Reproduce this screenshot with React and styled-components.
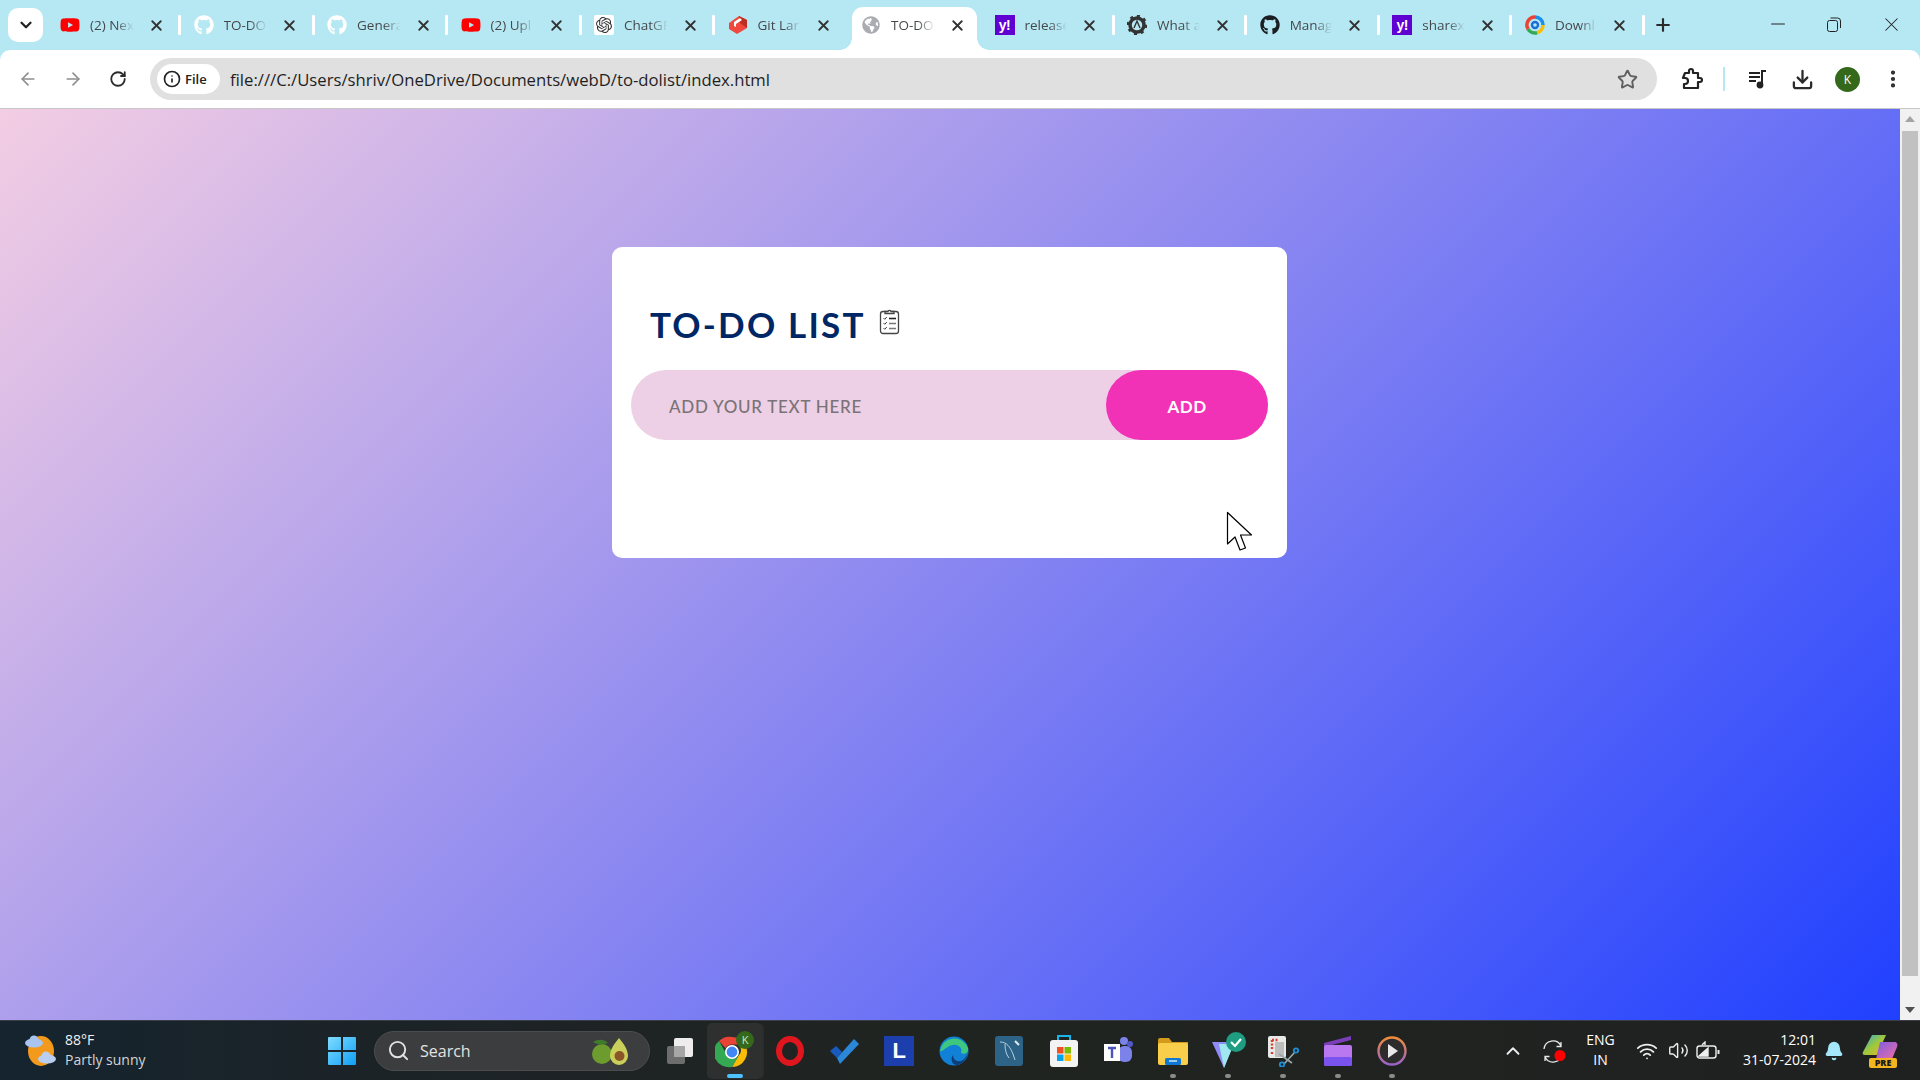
import styled, { createGlobalStyle } from 'styled-components';
import {
  ArrowLeft, ArrowRight, RotateCw, Info, Star, Download, X, Plus, Minus,
  Search, ChevronUp, ChevronDown, Wifi, Volume2, Bell, MoreVertical,
} from 'lucide-react';
import { FaGithub, FaYoutube, FaGlobeAmericas } from 'react-icons/fa';
import { SiOpenai } from 'react-icons/si';

const GlobalStyle = createGlobalStyle`
  html, body { margin: 0; padding: 0; height: 100%; overflow: hidden; }
  #root { height: 100%; }
  * { box-sizing: border-box; }
  body { font-family: "Open Sans", "Noto Sans", sans-serif; }
`;

const Screen = styled.div`
  display: flex;
  flex-direction: column;
  width: 1920px;
  height: 1080px;
  position: relative;
  background: #b6e8f4;
`;

/* tab strip */
const TabStrip = styled.div`
  display: flex;
  align-items: flex-end;
  height: 50px;
  flex: none;
  padding-left: 8px;
`;

const TabSearch = styled.div`
  width: 35px;
  height: 34px;
  margin: 0 3px 8px 0;
  background: #fff;
  border-radius: 10px;
  display: flex;
  align-items: center;
  justify-content: center;
  color: #222;
`;

const Tab = styled.div`
  position: relative;
  width: ${(p) => p.$w}px;
  height: 43px;
  flex: none;
  display: flex;
  align-items: center;
  padding: 0 15px 7px 14px;
  color: #45484b;
  ${(p) => p.$active && `
    &::before {
      content: '';
      position: absolute;
      left: 5px;
      right: 4px;
      top: 0;
      bottom: 0;
      background: #fff;
      border-radius: 11px 11px 0 0;
    }
    & > * { position: relative; }
  `}
  ${(p) => p.$sep && `
    &::after {
      content: '';
      position: absolute;
      right: -1.5px;
      top: 8px;
      width: 3px;
      height: 20px;
      background: #fff;
      border-radius: 1px;
    }
  `}
`;

const Flare = styled.span`
  position: absolute !important;
  bottom: 0;
  width: 12px;
  height: 12px;
  ${(p) => (p.$side === 'left' ? 'left: -7px;' : 'right: -8px;')}
  background: radial-gradient(
    circle at ${(p) => (p.$side === 'left' ? '0 0' : '100% 0')},
    transparent 11.5px,
    #fff 12px
  );
`;

const Favicon = styled.span`
  width: 20px;
  height: 20px;
  flex: none;
  display: flex;
  align-items: center;
  justify-content: center;
`;

const TabTitle = styled.span`
  flex: 1;
  min-width: 0;
  margin: 0 14px 0 10px;
  font-size: 13.5px;
  white-space: nowrap;
  -webkit-mask-image: linear-gradient(90deg, #000 60%, transparent 100%);
  mask-image: linear-gradient(90deg, #000 60%, transparent 100%);
`;

const YahooMark = styled.span`
  width: 20px;
  height: 20px;
  background: #5f01d1;
  color: #fff;
  font: 700 14px "Liberation Sans", sans-serif;
  display: flex;
  align-items: center;
  justify-content: center;
  letter-spacing: -0.5px;
`;

const OpenAiMark = styled.span`
  width: 20px;
  height: 20px;
  background: #fff;
  border-radius: 2px;
  display: flex;
  align-items: center;
  justify-content: center;
  color: #333;
`;

const NewTab = styled.div`
  width: 30px;
  height: 30px;
  margin: 0 0 10px 5px;
  display: flex;
  align-items: center;
  justify-content: center;
  color: #2b2b2b;
`;

const WindowControls = styled.div`
  margin-left: auto;
  display: flex;
  align-self: stretch;
  align-items: center;
  padding-bottom: 2px;
  color: #222;
`;

const WindowButton = styled.span`
  width: ${(p) => p.$w || 56}px;
  display: flex;
  align-items: center;
  justify-content: center;
`;

/* toolbar */
const Toolbar = styled.div`
  height: 59px;
  flex: none;
  background: #fff;
  border-radius: 10px 10px 0 0;
  border-bottom: 1px solid #c7c7c7;
  display: flex;
  align-items: center;
  padding: 0 0 0 5px;
`;

const ToolSlot = styled.span`
  width: 45px;
  height: 42px;
  flex: none;
  display: flex;
  align-items: center;
  justify-content: center;
  color: ${(p) => (p.$dim ? '#8f8f8f' : '#2b2b2b')};
`;

const Omnibox = styled.div`
  width: 1507px;
  height: 42px;
  margin: 0 12px 0 10px;
  background: #e0e0e0;
  border-radius: 21px;
  display: flex;
  align-items: center;
  padding: 0 19px 0 7px;
`;

const FileChip = styled.div`
  width: 63px;
  height: 30px;
  background: #fff;
  border-radius: 15px;
  display: flex;
  align-items: center;
  gap: 4px;
  padding-left: 6px;
  font-size: 13px;
  font-weight: 600;
  color: #222;
`;

const Url = styled.span`
  margin-left: 10px;
  font-size: 16.7px;
  color: #1f1f1f;
  white-space: nowrap;
  flex: 1;
`;

const ToolDivider = styled.span`
  width: 2px;
  height: 24px;
  margin: 0 10px 0 9px;
  background: #b6e8f4;
  flex: none;
`;

const Avatar = styled.span`
  width: 25px;
  height: 25px;
  border-radius: 50%;
  background: #34691c;
  color: #fff;
  font-size: 12px;
  display: flex;
  align-items: center;
  justify-content: center;
`;

/* page */
const PageRow = styled.div`
  flex: 1;
  display: flex;
  min-height: 0;
`;

const Viewport = styled.main`
  flex: 1;
  background: linear-gradient(135deg, #f3cde3 0%, #2040ff 100%);
  padding: 138px 1px 0 0;
`;

const Card = styled.section`
  width: 675px;
  height: 311px;
  margin: 0 auto;
  background: #fff;
  border-radius: 10px;
  padding: 46px 19px 0;
`;

const Heading = styled.h2`
  margin: 0 0 15px 19px;
  display: flex;
  align-items: center;
  gap: 13px;
  height: 62px;
  color: #002765;
  font: 700 35px "Comic Sans MS", Lato, sans-serif;
  letter-spacing: 2.2px;
  white-space: nowrap;
`;

const ClipIcon = styled.svg`
  width: 21px;
  height: 27px;
  margin-top: -5px;
`;

const InputRow = styled.div`
  height: 70px;
  background: #edd0e5;
  border-radius: 35px;
  display: flex;
  align-items: center;
  justify-content: space-between;
`;

const TodoInput = styled.input`
  flex: 1;
  min-width: 0;
  height: 100%;
  border: none;
  outline: none;
  background: transparent;
  padding: 2px 0 0 38px;
  font: 500 17px "Comic Sans MS", Lato, sans-serif;
  letter-spacing: 0.72px;
  &::placeholder { color: #7a7378; opacity: 1; }
`;

const AddButton = styled.button`
  width: 162px;
  height: 70px;
  border: none;
  border-radius: 35px;
  background: #f232b6;
  color: #fff;
  padding-top: 4px;
  font: 700 17px "Comic Sans MS", Lato, sans-serif;
  letter-spacing: 0.5px;
`;

const Cursor = styled.svg`
  position: absolute;
  left: 1226px;
  top: 511px;
  width: 28px;
  height: 41px;
`;

/* scrollbar */
const Scrollbar = styled.aside`
  width: 20px;
  flex: none;
  background: #f1f1f1;
  display: flex;
  flex-direction: column;
  align-items: center;
  padding-top: 22px;
  position: relative;
`;

const ScrollArrow = styled.span`
  position: absolute;
  left: 5px;
  ${(p) => (p.$down ? 'bottom: 7px; border-top: 6px solid #505050;' : 'top: 7px; border-bottom: 6px solid #a3a3a3;')}
  border-left: 5px solid transparent;
  border-right: 5px solid transparent;
`;

const ScrollThumb = styled.span`
  width: 16px;
  height: 845px;
  background: #c1c1c1;
`;

/* taskbar */
const Taskbar = styled.footer`
  height: 60px;
  flex: none;
  display: flex;
  align-items: center;
  background: linear-gradient(90deg, #15242f 0%, #1c2327 20%, #202420 50%, #1f2120 100%);
  border-top: 1px solid #3a3f47;
  color: #fff;
`;

const Weather = styled.div`
  width: 310px;
  flex: none;
  display: flex;
  align-items: center;
  gap: 8px;
  padding-left: 24px;
`;

const WeatherText = styled.div`
  font-size: 14px;
  line-height: 20px;
  color: #f2f2f2;
  margin-top: -1px;
  span { display: block; color: #d4d4d4; }
`;

const StartSlot = styled.span`
  width: 64px;
  flex: none;
  display: flex;
  justify-content: center;
`;

const SearchPill = styled.div`
  width: 276px;
  height: 40px;
  flex: none;
  background: #3c3d3e;
  border: 1px solid #4c4d4e;
  border-radius: 20px;
  display: flex;
  align-items: center;
  padding: 0 20px 0 12px;
  gap: 10px;
  color: #e2e2e2;
  font-size: 16px;
  svg:last-child { margin-left: auto; }
`;

const TaskIcons = styled.div`
  display: flex;
  margin-left: 2.6px;
  flex: none;
`;

const TaskSlot = styled.span`
  position: relative;
  width: 54.8px;
  height: 56px;
  display: flex;
  align-items: center;
  justify-content: center;
  ${(p) => p.$on && `
    background: #2d302f;
    border-radius: 5px;
    box-shadow: 3px 0 0 -1px #2a2d2c;
  `}
`;

const RunDot = styled.i`
  position: absolute;
  bottom: 1px;
  left: 50%;
  transform: translateX(-50%);
  width: ${(p) => (p.$on ? 16 : 6)}px;
  height: 4px;
  border-radius: 2px;
  background: ${(p) => (p.$on ? '#4cc2ff' : '#8a8a8a')};
`;

const Tray = styled.div`
  margin-left: auto;
  display: flex;
  align-items: center;
  padding-right: 12px;
  flex: none;
`;

const TraySlot = styled.span`
  width: ${(p) => p.$w}px;
  display: flex;
  align-items: center;
  justify-content: center;
  position: relative;
`;

const Lang = styled.div`
  width: 56px;
  text-align: center;
  font-size: 14px;
  line-height: 20px;
  margin-top: -1px;
`;

const Clock = styled.div`
  width: 92px;
  text-align: right;
  font-size: 14px;
  line-height: 20px;
  margin-top: -1px;
`;

const GitBox = () => (
  <svg width="20" height="20" viewBox="0 0 20 20">
    <polygon points="1,8 11,1 19,5 19,13 9,19 1,14" fill="#f0483e" />
    <polygon points="11,1 19,5 19,13 12,8" fill="#bc2d22" />
    <polygon points="6,7 12,3 14,5 8,9 8,12 6,11" fill="#fff" />
  </svg>
);

const GearMark = () => (
  <svg width="20" height="20" viewBox="0 0 20 20">
    <circle cx="10" cy="10" r="7" fill="none" stroke="#333" strokeWidth="3.5" />
    <circle cx="10" cy="10" r="9" fill="none" stroke="#333" strokeWidth="2.5" strokeDasharray="3 4" />
    <path d="M7 13l3-7 3 7" fill="none" stroke="#333" strokeWidth="1.4" />
  </svg>
);

const SwirlMark = () => (
  <svg width="20" height="20" viewBox="0 0 20 20" fill="none" strokeWidth="3.5">
    <path d="M10 2a8 8 0 0 1 8 8" stroke="#1a8fe8" />
    <path d="M18 10a8 8 0 0 1-6 7.7" stroke="#fbbc05" />
    <path d="M12 17.7A8 8 0 0 1 3 14" stroke="#34a853" />
    <path d="M3 14A8 8 0 0 1 10 2" stroke="#ea4335" />
    <circle cx="10" cy="10" r="3" stroke="#1a6fd8" strokeWidth="2.4" />
  </svg>
);

const TABS = [
  { title: '(2) Nex', icon: <FaYoutube size={22} color="#f00" /> },
  { title: 'TO-DO', icon: <FaGithub size={20} color="#fff" /> },
  { title: 'Genera', icon: <FaGithub size={20} color="#fff" /> },
  { title: '(2) Upl', icon: <FaYoutube size={22} color="#f00" /> },
  { title: 'ChatGP', icon: <OpenAiMark><SiOpenai size={16} /></OpenAiMark> },
  { title: 'Git Lar', icon: <GitBox /> },
  { title: 'TO-DO', icon: <FaGlobeAmericas size={18} color="#a9adb3" />, active: true },
  { title: 'release', icon: <YahooMark>y!</YahooMark> },
  { title: 'What a', icon: <GearMark /> },
  { title: 'Manag', icon: <FaGithub size={20} color="#1b1f23" /> },
  { title: 'sharex', icon: <YahooMark>y!</YahooMark> },
  { title: 'Downl', icon: <SwirlMark /> },
];

const RestoreIcon = () => (
  <svg width="14" height="15" viewBox="0 0 14 15" fill="none" stroke="#222" strokeWidth="1">
    <rect x="0.5" y="3.5" width="10" height="11" rx="2" />
    <path d="M3.5 1h7a3 3 0 0 1 3 3v7" />
  </svg>
);

const PuzzleIcon = () => (
  <svg width="22" height="24" viewBox="0 0 22 24" fill="none" stroke="#222" strokeWidth="2.2" strokeLinejoin="round">
    <path d="M4 6h4V4a2 2 0 0 1 4 0v2h5v5h2a2 2 0 0 1 0 4h-2v6H3v-4h1a3 3 0 0 0 0-6H2z" />
  </svg>
);

const MediaIcon = () => (
  <svg width="22" height="22" viewBox="0 0 22 22" fill="none" stroke="#222" strokeWidth="2">
    <path d="M2 5h11M2 9h11M2 13h7" />
    <path d="M15 17V3h4" />
    <circle cx="13" cy="17" r="2.4" fill="#222" />
  </svg>
);

const ClipboardIcon = () => (
  <ClipIcon viewBox="0 0 21 27" fill="none" stroke="#444" strokeWidth="1.3">
    <rect x="1.5" y="3.5" width="18" height="22" rx="2.5" />
    <path d="M6 5.5V3.5h3a1.6 1.6 0 0 1 3 0h3v2z" fill="#fff" />
    <path d="M4.5 10l1.3 1.3 2-2.3M4.5 15l1.3 1.3 2-2.3M4.5 20l1.3 1.3 2-2.3" strokeWidth="1" />
    <path d="M10 10.5h7" stroke="#222" strokeWidth="1.6" />
    <path d="M10 15.5h7M10 20.5h7" stroke="#777" strokeWidth="1.6" />
  </ClipIcon>
);

const WeatherIcon = () => (
  <svg width="33" height="36" viewBox="0 0 33 36">
    <ellipse cx="17" cy="18" rx="13" ry="15" fill="#f39a1d" />
    <ellipse cx="10" cy="10" rx="9" ry="4.5" fill="#a9c4ee" />
    <circle cx="10" cy="7" r="4.5" fill="#a9c4ee" />
    <ellipse cx="23" cy="26" rx="9" ry="4.5" fill="#b9cff2" />
    <circle cx="22" cy="23" r="4.5" fill="#b9cff2" />
  </svg>
);

const WinLogo = () => (
  <svg width="30" height="30" viewBox="0 0 30 30">
    <defs>
      <linearGradient id="win" x1="0" y1="0" x2="1" y2="1">
        <stop offset="0" stopColor="#7fdcff" />
        <stop offset="1" stopColor="#0f9ef5" />
      </linearGradient>
    </defs>
    <path d="M1 2a1 1 0 0 1 1-1h12v13H1zM16 1h12a1 1 0 0 1 1 1v12H16zM1 16h13v13H2a1 1 0 0 1-1-1zM16 16h13v12a1 1 0 0 1-1 1H16z" fill="url(#win)" />
  </svg>
);

const AvocadoIcon = () => (
  <svg width="37" height="28" viewBox="0 0 37 28">
    <circle cx="10" cy="17" r="10" fill="#6d9c2e" />
    <path d="M1 5c5-3 11-3 15 1-5 2-11 2-15-1z" fill="#3f7b2a" />
    <path d="M27 1c4 5 9 11 9 18a8.5 8.5 0 0 1-18 0c0-7 5-13 9-18z" fill="#c9cf5a" />
    <circle cx="27.5" cy="19" r="5" fill="#8a5527" />
  </svg>
);

const TaskView = () => (
  <svg width="28" height="28" viewBox="0 0 28 28">
    <rect x="1" y="9" width="18" height="18" rx="2" fill="#6d6d6d" />
    <rect x="8" y="1" width="19" height="19" rx="2" fill="#ededed" />
    <rect x="8" y="9" width="11" height="11" fill="#a6a6a6" />
  </svg>
);

const ChromeIcon = () => (
  <svg width="40" height="42" viewBox="0 0 40 42">
    <path d="M17 7a15 15 0 0 1 13 7.5H17a7.5 7.5 0 0 0-6.5 3.7L4 11A15 15 0 0 1 17 7z" fill="#ea4335" />
    <path d="M30 14.5A15 15 0 0 1 17 37l6.5-11.2a7.5 7.5 0 0 0 0-11.3z" fill="#fbbc05" />
    <path d="M4 11l6.5 11.2A7.5 7.5 0 0 0 23.5 26L17 37A15 15 0 0 1 4 11z" fill="#34a853" />
    <circle cx="17" cy="22" r="6.2" fill="#4285f4" stroke="#fff" strokeWidth="1.6" />
    <circle cx="30" cy="10" r="9" fill="#34691c" />
    <text x="30" y="14" textAnchor="middle" fontSize="11" fill="#cfe6c0" fontFamily="Open Sans">K</text>
  </svg>
);

const OperaIcon = () => (
  <svg width="30" height="32" viewBox="0 0 30 32">
    <ellipse cx="15" cy="16" rx="11" ry="12" fill="none" stroke="#e0161f" strokeWidth="6" />
  </svg>
);

const TodoIcon = () => (
  <svg width="30" height="26" viewBox="0 0 30 26">
    <path d="M1 13l6-5 6 6-5 6z" fill="#185abd" />
    <path d="M8 20L25 1l5 5-19 20z" fill="#2b88d8" />
  </svg>
);

const LetterL = styled.span`
  width: 30px;
  height: 30px;
  background: #1d3fae;
  color: #fff;
  font: 700 22px "Liberation Sans", sans-serif;
  display: flex;
  align-items: center;
  justify-content: center;
`;

const EdgeIcon = () => (
  <svg width="30" height="30" viewBox="0 0 30 30">
    <circle cx="15" cy="15" r="14.5" fill="#1081d6" />
    <path d="M1 15A14.5 14.5 0 0 1 29 12c1 5-4 7-7 5 2-5-3-9-8-8-7 1-11 8-13 6z" fill="#3ec77f" />
    <path d="M29 17c-1 7-7 12-11 12-5 0-7-6-4-10 0 4 3 7 8 6 3-1 5-4 7-8z" fill="#0c3e78" />
  </svg>
);

const MysqlIcon = () => (
  <svg width="28" height="30" viewBox="0 0 28 30">
    <rect width="28" height="30" rx="3" fill="#2d6386" />
    <path d="M5 6c7 0 10 5 13 12l2 6M10 8c0 6 1 10 4 14" stroke="#b7cfdc" strokeWidth="1" fill="none" />
    <path d="M20 5l4 4" stroke="#dfe9ee" strokeWidth="2" />
  </svg>
);

const StoreIcon = () => (
  <svg width="30" height="32" viewBox="0 0 30 32">
    <path d="M9 6V1h12v5" fill="none" stroke="#1ab5e8" strokeWidth="2" />
    <rect x="1" y="5" width="28" height="27" rx="3" fill="#f3f3f3" />
    <rect x="8" y="12" width="6.5" height="6.5" fill="#f25022" />
    <rect x="15.5" y="12" width="6.5" height="6.5" fill="#7fba00" />
    <rect x="8" y="19.5" width="6.5" height="6.5" fill="#00a4ef" />
    <rect x="15.5" y="19.5" width="6.5" height="6.5" fill="#ffb900" />
  </svg>
);

const TeamsIcon = () => (
  <svg width="32" height="30" viewBox="0 0 32 30">
    <circle cx="22" cy="5" r="4" fill="#7b83eb" />
    <circle cx="28" cy="8" r="3" fill="#5059c9" />
    <rect x="16" y="10" width="14" height="16" rx="6" fill="#7b83eb" />
    <rect x="2" y="8" width="16" height="17" fill="#fff" />
    <path d="M6 12h8M10 12v10" stroke="#4b53bc" strokeWidth="2.4" />
  </svg>
);

const FolderIcon = () => (
  <svg width="30" height="28" viewBox="0 0 30 28">
    <path d="M0 3a2 2 0 0 1 2-2h9l3 4h16v6H0z" fill="#d39a1c" />
    <rect y="6" width="30" height="22" rx="2" fill="#f9ce4b" />
    <rect x="7" y="21" width="16" height="7" rx="1.5" fill="#0f78d4" />
    <path d="M11 24h8" stroke="#cfe8fb" strokeWidth="1.5" />
  </svg>
);

const VectorIcon = () => (
  <svg width="36" height="38" viewBox="0 0 36 38">
    <path d="M2 10h22L14 36z" fill="#8f8cf6" />
    <path d="M9 12h15L14 36z" fill="#9fe8ef" />
    <circle cx="26" cy="10" r="10" fill="#1f9d82" />
    <path d="M21 10l4 4 6-7" fill="none" stroke="#fff" strokeWidth="2.2" />
  </svg>
);

const SnipIcon = () => (
  <svg width="32" height="32" viewBox="0 0 32 32">
    <rect x="1" y="1" width="18" height="22" rx="2" fill="#e8e8e8" />
    <path d="M5 5h6M5 5v9M5 17v2" stroke="#d8402f" strokeWidth="2.4" strokeDasharray="2 1.5" fill="none" />
    <rect x="8" y="7" width="9" height="15" fill="#bdbdbd" />
    <path d="M12 19l13 9M28 17L17 29" stroke="#9aa" strokeWidth="1.6" />
    <circle cx="15" cy="29.5" r="2.2" fill="none" stroke="#1a8fd8" strokeWidth="1.8" />
    <circle cx="29" cy="15.5" r="2.2" fill="none" stroke="#1a8fd8" strokeWidth="1.8" />
  </svg>
);

const ClipchampIcon = () => (
  <svg width="30" height="30" viewBox="0 0 30 30">
    <path d="M1 7L28 0v4L1 11z" fill="#7a3fb8" />
    <rect x="1" y="9" width="28" height="21" rx="2" fill="#b978f0" />
    <rect x="1" y="21" width="28" height="9" rx="2" fill="#7a52ee" />
  </svg>
);

const PlayerIcon = () => (
  <svg width="30" height="32" viewBox="0 0 30 32">
    <defs>
      <linearGradient id="ring" x1="0" y1="0" x2="0" y2="1">
        <stop offset="0" stopColor="#f08c3a" />
        <stop offset="1" stopColor="#9a63c9" />
      </linearGradient>
    </defs>
    <circle cx="15" cy="16" r="13.5" fill="#2c2c2c" stroke="url(#ring)" strokeWidth="2.4" />
    <path d="M11 9l10 7-10 7z" fill="#e8e8e8" />
  </svg>
);

const SyncIcon = () => (
  <svg width="26" height="26" viewBox="0 0 26 26" fill="none" stroke="#e8e8e8" strokeWidth="1.3">
    <path d="M3 11a9 9 0 0 1 17-3M20 4v4.5h-4.5" />
    <path d="M21 16a9 9 0 0 1-17 3M4 23v-4.5h4.5" />
    <circle cx="19" cy="17.5" r="5.5" fill="#f00" stroke="none" />
  </svg>
);

const BatteryIcon = () => (
  <svg width="24" height="20" viewBox="0 0 24 20" fill="none" stroke="#eee" strokeWidth="1.4">
    <rect x="1" y="5" width="19" height="12" rx="2.5" />
    <path d="M22.5 9v4" strokeWidth="2" />
    <path d="M3 15L12 7v8z" fill="#eee" />
    <path d="M6 4l3-3v3" />
  </svg>
);

const CopilotIcon = () => (
  <svg width="36" height="36" viewBox="0 0 36 36">
    <defs>
      <linearGradient id="cp" x1="0" y1="0" x2="1" y2="1">
        <stop offset="0" stopColor="#2aa6e6" />
        <stop offset="0.5" stopColor="#9ec93a" />
        <stop offset="1" stopColor="#f0b030" />
      </linearGradient>
      <linearGradient id="cp2" x1="0" y1="0" x2="1" y2="1">
        <stop offset="0" stopColor="#7c5be0" />
        <stop offset="1" stopColor="#ef6fa8" />
      </linearGradient>
    </defs>
    <path d="M10 2h14l-9 20H3c-2 0-3-1-2-3z" fill="url(#cp)" />
    <path d="M18 9h14c3 0 4 2 3 5l-5 12H14z" fill="url(#cp2)" />
    <rect x="7" y="25" width="28" height="10" rx="2" fill="#f3b61f" />
    <text x="21" y="33" textAnchor="middle" fontSize="9" fontWeight="800" fill="#1a1a1a" fontFamily="Open Sans">PRE</text>
  </svg>
);

const TASK_ITEMS = [
  { el: <TaskView /> },
  { el: <ChromeIcon />, on: true },
  { el: <OperaIcon /> },
  { el: <TodoIcon /> },
  { el: <LetterL>L</LetterL> },
  { el: <EdgeIcon /> },
  { el: <MysqlIcon /> },
  { el: <StoreIcon /> },
  { el: <TeamsIcon /> },
  { el: <FolderIcon />, dot: true },
  { el: <VectorIcon />, dot: true },
  { el: <SnipIcon />, dot: true },
  { el: <ClipchampIcon />, dot: true },
  { el: <PlayerIcon />, dot: true },
];

export default function App() {
  return (
    <Screen>
      <GlobalStyle />
      <TabStrip>
        <TabSearch><ChevronDown size={18} strokeWidth={3} /></TabSearch>
        {TABS.map((tab, i) => {
          const next = TABS[i + 1];
          return (
            <Tab
              key={i}
              $w={i < 7 ? 133.5 : 132.6}
              $active={tab.active}
              $sep={!tab.active && !(next && next.active)}
            >
              {tab.active && <Flare $side="left" />}
              <Favicon>{tab.icon}</Favicon>
              <TabTitle>{tab.title}</TabTitle>
              <X size={17} strokeWidth={2.6} color="#333" />
              {tab.active && <Flare $side="right" />}
            </Tab>
          );
        })}
        <NewTab><Plus size={20} strokeWidth={2.6} /></NewTab>
        <WindowControls>
          <WindowButton><Minus size={22} strokeWidth={1.1} /></WindowButton>
          <WindowButton><RestoreIcon /></WindowButton>
          <WindowButton $w={58}><X size={23} strokeWidth={1.1} /></WindowButton>
        </WindowControls>
      </TabStrip>

      <Toolbar>
        <ToolSlot $dim><ArrowLeft size={20} /></ToolSlot>
        <ToolSlot $dim><ArrowRight size={20} /></ToolSlot>
        <ToolSlot><RotateCw size={18} strokeWidth={2.4} /></ToolSlot>
        <Omnibox>
          <FileChip><Info size={18} strokeWidth={2.2} />File</FileChip>
          <Url>file:///C:/Users/shriv/OneDrive/Documents/webD/to-dolist/index.html</Url>
          <Star size={21} strokeWidth={2.2} color="#5f5f5f" />
        </Omnibox>
        <ToolSlot><PuzzleIcon /></ToolSlot>
        <ToolDivider />
        <ToolSlot><MediaIcon /></ToolSlot>
        <ToolSlot><Download size={23} strokeWidth={2.4} /></ToolSlot>
        <ToolSlot><Avatar>K</Avatar></ToolSlot>
        <ToolSlot><MoreVertical size={22} strokeWidth={2.6} /></ToolSlot>
      </Toolbar>

      <PageRow>
        <Viewport>
          <Card>
            <Heading>
              TO-DO LIST
              <ClipboardIcon />
            </Heading>
            <InputRow>
              <TodoInput placeholder="ADD YOUR TEXT HERE" />
              <AddButton>ADD</AddButton>
            </InputRow>
          </Card>
        </Viewport>
        <Scrollbar>
          <ScrollArrow />
          <ScrollThumb />
          <ScrollArrow $down />
        </Scrollbar>
      </PageRow>

      <Taskbar>
        <Weather>
          <WeatherIcon />
          <WeatherText>
            88°F
            <span>Partly sunny</span>
          </WeatherText>
        </Weather>
        <StartSlot><WinLogo /></StartSlot>
        <SearchPill>
          <Search size={23} strokeWidth={2} />
          Search
          <AvocadoIcon />
        </SearchPill>
        <TaskIcons>
          {TASK_ITEMS.map((item, i) => (
            <TaskSlot key={i} $on={item.on}>
              {item.el}
              {(item.on || item.dot) && <RunDot $on={item.on} />}
            </TaskSlot>
          ))}
        </TaskIcons>
        <Tray>
          <TraySlot $w={44}><ChevronUp size={22} strokeWidth={2} color="#eee" /></TraySlot>
          <TraySlot $w={38}><SyncIcon /></TraySlot>
          <Lang>ENG<br />IN</Lang>
          <TraySlot $w={36}><Wifi size={22} color="#eee" /></TraySlot>
          <TraySlot $w={27}><Volume2 size={21} strokeWidth={1.6} color="#eee" /></TraySlot>
          <TraySlot $w={32.5}><BatteryIcon /></TraySlot>
          <Clock>12:01<br />31-07-2024</Clock>
          <TraySlot $w={36}><Bell size={20} fill="#a5e6fb" color="#a5e6fb" /></TraySlot>
          <TraySlot $w={56}><CopilotIcon /></TraySlot>
        </Tray>
      </Taskbar>

      <Cursor viewBox="0 0 28 41">
        <path d="M1.5 1.5V33l7.5-7 5 13 5.5-2-5-13h11z" fill="#fff" stroke="#000" strokeWidth="1.2" strokeLinejoin="round" />
      </Cursor>
    </Screen>
  );
}
